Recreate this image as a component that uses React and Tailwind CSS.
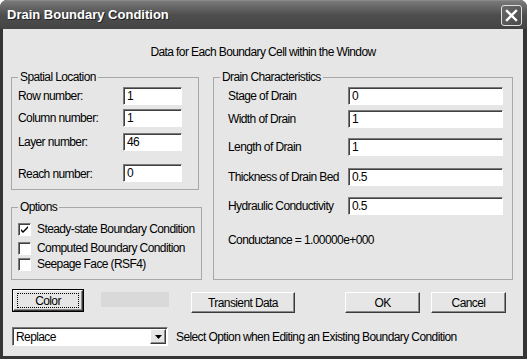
import React from 'react';

const font = { fontFamily: '"Liberation Sans", Arial, sans-serif' };

function Field({ value, className = '' }) {
  return (
    <div
      className={`h-[18px] bg-white border border-t-[#7a7a7a] border-l-[#7a7a7a] border-b-white border-r-white shadow-[inset_1px_1px_0_#404040] pl-[3px] leading-[16px] ${className}`}
    >
      {value}
    </div>
  );
}

function Btn({ children, className = '' }) {
  return (
    <div
      className={`h-[21px] flex items-center justify-center bg-[#e6e6e6] border border-t-white border-l-white border-b-[#3a3a3a] border-r-[#3a3a3a] shadow-[inset_-1px_-1px_0_#8a8a8a] ${className}`}
    >
      {children}
    </div>
  );
}

function Check({ checked, label, className = '' }) {
  return (
    <div className={`h-[13px] flex items-center whitespace-nowrap ${className}`}>
      <div className="w-[13px] h-[13px] shrink-0 bg-white border border-t-[#7a7a7a] border-l-[#7a7a7a] border-b-white border-r-white shadow-[inset_1px_1px_0_#404040] flex items-center justify-center">
        {checked && (
          <svg width="9" height="9" viewBox="0 0 9 9">
            <path d="M1 4 L3 6 L8 1 L8 3 L3 8 L1 6 Z" fill="#000" />
          </svg>
        )}
      </div>
      <span className="ml-[6px] leading-[13px]">{label}</span>
    </div>
  );
}

export default function App() {
  return (
    <div
      style={font}
      className="w-[527px] h-[359px] bg-[#353535] rounded-t-[7px] flex flex-col text-[12px] tracking-[-0.6px] text-black overflow-hidden"
    >
      {/* barra de titulo */}
      <div className="h-[29px] flex items-center justify-between pl-[7px] pr-[5px] rounded-t-[7px] bg-gradient-to-b from-[#7a7a7a] via-[#4e4e4e] to-[#444444] border-t border-[#8a8a8a]">
        <span className="text-white font-bold text-[13px] tracking-normal [text-shadow:1px_1px_0_#222]">
          Drain Boundary Condition
        </span>
        <div className="w-[21px] h-[21px] rounded-[3px] border border-[#e0e0e0] bg-gradient-to-br from-[#6a6a6a] to-[#4a4a4a] flex items-center justify-center">
          <svg width="13" height="13" viewBox="0 0 13 13">
            <path d="M2 2 L11 11 M11 2 L2 11" stroke="#fff" strokeWidth="2.4" strokeLinecap="square" />
          </svg>
        </div>
      </div>

      {/* cuerpo */}
      <div className="flex-1 ml-[3px] mr-[4px] mb-[3px] bg-[#e6e6e6] flex flex-col">
        <div className="pt-[16px] leading-[14px] text-center">
          Data for Each Boundary Cell within the Window
        </div>

        <div className="flex mt-[11px] pl-[8px]">
          <div className="w-[188px] flex flex-col">
            <fieldset className="h-[120px] border border-[#a8a8a8] px-[6px] pt-[3px]">
              <legend className="px-[2px] leading-[14px]">Spatial Location</legend>
              <div className="flex items-center h-[18px]">
                <span className="w-[105px]">Row number:</span>
                <Field value="1" className="w-[59px]" />
              </div>
              <div className="flex items-center h-[18px] mt-[4px]">
                <span className="w-[105px]">Column number:</span>
                <Field value="1" className="w-[59px]" />
              </div>
              <div className="flex items-center h-[18px] mt-[6px]">
                <span className="w-[105px]">Layer number:</span>
                <Field value="46" className="w-[59px]" />
              </div>
              <div className="flex items-center h-[18px] mt-[13px]">
                <span className="w-[105px] pt-[2px]">Reach number:</span>
                <Field value="0" className="w-[59px]" />
              </div>
            </fieldset>

            <fieldset className="h-[80px] mt-[10px] border border-[#a8a8a8] px-[6px] pt-[9px]">
              <legend className="px-[2px] leading-[14px]">Options</legend>
              <Check checked label="Steady-state Boundary Condition" />
              <Check label="Computed Boundary Condition" className="mt-[6px]" />
              <Check label="Seepage Face (RSF4)" className="mt-[3px]" />
            </fieldset>
          </div>

          <fieldset className="w-[300px] h-[210px] ml-[14px] border border-[#a8a8a8] pl-[6px] pt-[3px]">
            <legend className="px-[2px] leading-[14px]">Drain Characteristics</legend>
            <div className="pl-[8px]">
              <div className="flex items-center h-[18px]">
                <span className="w-[120px]">Stage of Drain</span>
                <Field value="0" className="w-[155px]" />
              </div>
              <div className="flex items-center h-[18px] mt-[5px]">
                <span className="w-[120px]">Width of Drain</span>
                <Field value="1" className="w-[155px]" />
              </div>
              <div className="flex items-center h-[18px] mt-[10px]">
                <span className="w-[120px]">Length of Drain</span>
                <Field value="1" className="w-[155px]" />
              </div>
              <div className="flex items-center h-[18px] mt-[12px]">
                <span className="w-[120px]">Thickness of Drain Bed</span>
                <Field value="0.5" className="w-[155px]" />
              </div>
              <div className="flex items-center h-[18px] mt-[11px]">
                <span className="w-[120px]">Hydraulic Conductivity</span>
                <Field value="0.5" className="w-[155px]" />
              </div>
              <div className="mt-[18px] leading-[14px]">Conductance = 1.00000e+000</div>
            </div>
          </fieldset>
        </div>

        <div className="flex items-start mt-[9px] pl-[9px]">
          <div className="w-[72px] h-[23px] border border-black flex">
            <Btn className="flex-1 h-full">
              <span className="border border-dotted border-black w-[62px] h-[15px] flex items-center justify-center leading-none">
                Color
              </span>
            </Btn>
          </div>
          <div className="w-[68px] h-[15px] mt-[3px] ml-[17px] bg-[#d9d9d9]" />
          <Btn className="w-[104px] mt-[3px] ml-[22px]">Transient Data</Btn>
          <Btn className="w-[75px] mt-[3px] ml-[50px]">OK</Btn>
          <Btn className="w-[75px] mt-[3px] ml-[11px]">Cancel</Btn>
        </div>

        <div className="flex items-center mt-[14px] pl-[9px]">
          <div className="w-[156px] h-[19px] bg-white border border-t-[#7a7a7a] border-l-[#7a7a7a] border-b-white border-r-white shadow-[inset_1px_1px_0_#404040] flex items-center justify-between pl-[3px] pr-[1px]">
            <span>Replace</span>
            <div className="w-[16px] h-[15px] bg-[#e6e6e6] border border-t-white border-l-white border-b-[#3a3a3a] border-r-[#3a3a3a] shadow-[inset_-1px_-1px_0_#8a8a8a] flex items-center justify-center">
              <svg width="7" height="4" viewBox="0 0 7 4">
                <path d="M0 0 H7 L3.5 4 Z" fill="#000" />
              </svg>
            </div>
          </div>
          <span className="ml-[8px]">Select Option when Editing an Existing Boundary Condition</span>
        </div>
      </div>
    </div>
  );
}
